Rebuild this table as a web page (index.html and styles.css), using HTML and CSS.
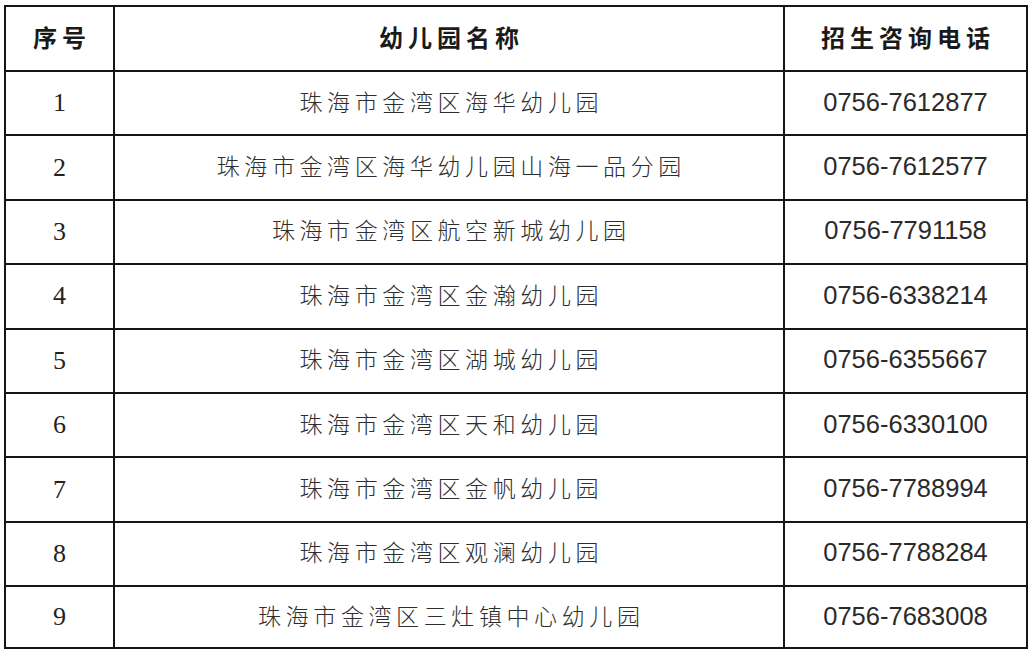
FILE: index.html
```html
<!DOCTYPE html>
<html lang="zh-CN">
<head>
<meta charset="utf-8">
<title>幼儿园招生咨询电话</title>
<link rel="stylesheet" href="styles.css">
</head>
<body>
<table class="list">
  <colgroup>
    <col class="c-no">
    <col class="c-name">
    <col class="c-tel">
  </colgroup>
  <thead>
    <tr class="head">
      <th class="no">序号</th>
      <th class="name">幼儿园名称</th>
      <th class="tel">招生咨询电话</th>
    </tr>
  </thead>
  <tbody>
    <tr><td class="no">1</td><td class="name">珠海市金湾区海华幼儿园</td><td class="tel">0756-7612877</td></tr>
    <tr><td class="no">2</td><td class="name">珠海市金湾区海华幼儿园山海一品分园</td><td class="tel">0756-7612577</td></tr>
    <tr><td class="no">3</td><td class="name">珠海市金湾区航空新城幼儿园</td><td class="tel">0756-7791158</td></tr>
    <tr><td class="no">4</td><td class="name">珠海市金湾区金瀚幼儿园</td><td class="tel">0756-6338214</td></tr>
    <tr><td class="no">5</td><td class="name">珠海市金湾区湖城幼儿园</td><td class="tel">0756-6355667</td></tr>
    <tr><td class="no">6</td><td class="name">珠海市金湾区天和幼儿园</td><td class="tel">0756-6330100</td></tr>
    <tr><td class="no">7</td><td class="name">珠海市金湾区金帆幼儿园</td><td class="tel">0756-7788994</td></tr>
    <tr><td class="no">8</td><td class="name">珠海市金湾区观澜幼儿园</td><td class="tel">0756-7788284</td></tr>
    <tr class="last"><td class="no">9</td><td class="name">珠海市金湾区三灶镇中心幼儿园</td><td class="tel">0756-7683008</td></tr>
  </tbody>
</table>
</body>
</html>
```

FILE: styles.css
```css
html, body {
  margin: 0;
  padding: 0;
  background: #ffffff;
}

body {
  padding: 5px 0 0 4px;
  font-family: "Noto Sans CJK SC", sans-serif;
  color: #222;
}

.list {
  border-collapse: collapse;
  table-layout: fixed;
  width: 1022px;
}

.c-no { width: 109px; }
.c-name { width: 670px; }
.c-tel { width: 243px; }

.list th,
.list td {
  border: 2px solid #151515;
  padding: 0;
  text-align: center;
  vertical-align: middle;
}

.head { height: 65px; }
.list tbody tr { height: 64.4px; }
.list tbody tr.last { height: 62px; }

.list th {
  font-family: "Noto Sans CJK SC", sans-serif;
  font-weight: 700;
  font-size: 24px;
  letter-spacing: 5px;
  text-indent: 5px;
  color: #1a1a1a;
  padding-bottom: 4px;
}

.list td.no {
  font-family: "Liberation Serif", "Noto Sans CJK SC", serif;
  font-size: 26px;
  color: #222;
}

.list td.name {
  font-family: "Noto Sans CJK SC", sans-serif;
  font-weight: 300;
  font-size: 23px;
  letter-spacing: 4.6px;
  text-indent: 4.6px;
  color: #2e2e2e;
  padding-bottom: 5px;
}

.list td.tel {
  font-family: "Liberation Sans", "Noto Sans", sans-serif;
  font-size: 25.5px;
  color: #2a2a2a;
  padding-bottom: 2px;
}
```
